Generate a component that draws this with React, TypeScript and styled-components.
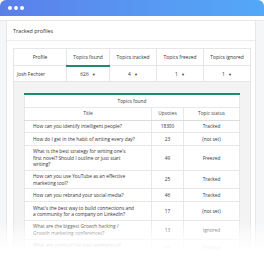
import React from "react";
import styled, { createGlobalStyle } from "styled-components";

const Global = createGlobalStyle`
  html, body { margin: 0; padding: 0; background: #ffffff; }
  body { font-family: "Open Sans", "Noto Sans", sans-serif; color: #333; }
  * { box-sizing: border-box; }
`;

const Window = styled.div`
  position: relative;
  width: 264px;
  height: 257px;
  overflow: hidden;
  display: flex;
  flex-direction: column;
  background: #fff;
`;

const TitleBar = styled.div`
  height: 16px;
  flex: none;
  border-radius: 6px 6px 0 0;
  background: linear-gradient(90deg, #5b7fe9 0%, #579af3 60%, #53a8f8 100%);
  display: flex;
  align-items: center;
  gap: 2px;
  padding-left: 8px;
`;

const Dot = styled.span`
  width: 4px;
  height: 4px;
  border-radius: 50%;
  background: #ffffff;
`;

const Page = styled.div`
  flex: 1;
  margin-top: 4px;
  border-top: 1px solid #e8e8ea;
  display: flex;
  background: #f5f6f8;
`;

const Gutter = styled.div<{ $side: "left" | "right" }>`
  flex: none;
  width: ${(p) => (p.$side === "left" ? "7px" : "9px")};
  ${(p) => (p.$side === "left" ? "border-right" : "border-left")}: 1px solid #e6e7ea;
`;

const Card = styled.div`
  flex: 1;
  background: #fff;
  display: flex;
  flex-direction: column;
`;

const CardHeading = styled.div`
  height: 20px;
  flex: none;
  display: flex;
  align-items: center;
  padding-left: 6px;
  font-size: 5.4px;
  color: #333;
  border-bottom: 1px solid #ececee;
`;

const CardBody = styled.div`
  padding: 7px 4px 0 6px;
`;

const Table = styled.table`
  width: 100%;
  border-collapse: collapse;
  table-layout: fixed;
  font-size: 4.9px;
`;

const HeadCell = styled.th<{ $active?: boolean }>`
  height: 17px;
  font-weight: 400;
  color: #333;
  text-align: center;
  border: 1px solid #e6e6e6;
  border-bottom: ${(p) => (p.$active ? "2px solid #1d8b70" : "1px solid #e6e6e6")};
  padding: 0;
`;

const DataCell = styled.td<{ $left?: boolean }>`
  height: 16px;
  color: #333;
  text-align: ${(p) => (p.$left ? "left" : "center")};
  padding: 0 ${(p) => (p.$left ? "3px" : "0")};
  border: 1px solid #e6e6e6;
`;

const Caret = styled.span`
  display: inline-block;
  margin-left: 3px;
  font-size: 4px;
  color: #444;
`;

const ExpandCell = styled.td`
  background: #f3f3f3;
  padding: 11px 10px 0 10px;
  border: 1px solid #e6e6e6;
  border-bottom: none;
`;

const Inner = styled.table`
  width: 100%;
  border-collapse: collapse;
  table-layout: fixed;
  background: #fff;
  border-top: 2px solid #1d8b70;
  font-size: 4.8px;
  line-height: 6.2px;
`;

const InnerTitle = styled.th`
  height: 13px;
  font-weight: 400;
  color: #333;
  text-align: center;
  border: 1px solid #e8e8e8;
`;

const InnerHead = styled.th`
  height: 13px;
  font-weight: 400;
  color: #444;
  text-align: center;
  border: 1px solid #e8e8e8;
  border-bottom: 1px solid #dcdcdc;
`;

const InnerCell = styled.td<{ $left?: boolean }>`
  padding: ${(p) => (p.$left ? "2.7px 6px 2.7px 8px" : "2.7px 2px")};
  text-align: ${(p) => (p.$left ? "left" : "center")};
  white-space: ${(p) => (p.$left ? "pre-line" : "normal")};
  color: #333;
  border: 1px solid #e8e8e8;
  vertical-align: middle;
`;

const Fade = styled.div`
  position: absolute;
  left: 0;
  right: 0;
  bottom: 0;
  height: 36px;
  background: linear-gradient(
    to bottom,
    rgba(255, 255, 255, 0) 0%,
    rgba(255, 255, 255, 0.65) 40%,
    #ffffff 82%
  );
  pointer-events: none;
`;

const topics: [string, string, string][] = [
  ["How can you identify intelligent people?", "18300", "Tracked"],
  ["How do I get in the habit of writing every day?", "23", "(not set)"],
  [
    "What is the best strategy for writing one's\nfirst novel? Should I outline or just start\nwriting?",
    "49",
    "Freezed",
  ],
  ["How can you use YouTube as an effective\nmarketing tool?", "25", "Tracked"],
  ["How can you rebrand your social media?", "46", "Tracked"],
  [
    "What's the best way to build connections and\na community for a company on LinkedIn?",
    "17",
    "(not set)",
  ],
  ["What are the biggest Growth hacking /\nGrowth marketing conferences?", "13", "Ignored"],
  ["What are some of the best examples of\nviral marketing campaigns?", "72", "Tracked"],
];

export default function App() {
  return (
    <>
      <Global />
      <Window>
        <TitleBar>
          <Dot />
          <Dot />
          <Dot />
        </TitleBar>
        <Page>
          <Gutter $side="left" />
          <Card>
            <CardHeading>Tracked profiles</CardHeading>
            <CardBody>
              <Table>
                <colgroup>
                  <col style={{ width: "53px" }} />
                  <col style={{ width: "43px" }} />
                  <col style={{ width: "47px" }} />
                  <col style={{ width: "47px" }} />
                  <col />
                </colgroup>
                <thead>
                  <tr>
                    <HeadCell>Profile</HeadCell>
                    <HeadCell $active>Topics found</HeadCell>
                    <HeadCell>Topics tracked</HeadCell>
                    <HeadCell>Topics freezed</HeadCell>
                    <HeadCell>Topics ignored</HeadCell>
                  </tr>
                </thead>
                <tbody>
                  <tr>
                    <DataCell $left>Josh Fechter</DataCell>
                    <DataCell>
                      626<Caret>▼</Caret>
                    </DataCell>
                    <DataCell>
                      4<Caret>▼</Caret>
                    </DataCell>
                    <DataCell>
                      1<Caret>▼</Caret>
                    </DataCell>
                    <DataCell>
                      1<Caret>▼</Caret>
                    </DataCell>
                  </tr>
                  <tr>
                    <ExpandCell colSpan={5}>
                      <Inner>
                        <colgroup>
                          <col />
                          <col style={{ width: "32px" }} />
                          <col style={{ width: "56px" }} />
                        </colgroup>
                        <thead>
                          <tr>
                            <InnerTitle colSpan={3}>Topics found</InnerTitle>
                          </tr>
                          <tr>
                            <InnerHead>Title</InnerHead>
                            <InnerHead>Upvotes</InnerHead>
                            <InnerHead>Topic status</InnerHead>
                          </tr>
                        </thead>
                        <tbody>
                          {topics.map(([t, u, s]) => (
                            <tr key={t}>
                              <InnerCell $left>{t}</InnerCell>
                              <InnerCell>{u}</InnerCell>
                              <InnerCell>{s}</InnerCell>
                            </tr>
                          ))}
                        </tbody>
                      </Inner>
                    </ExpandCell>
                  </tr>
                </tbody>
              </Table>
            </CardBody>
          </Card>
          <Gutter $side="right" />
        </Page>
        <Fade />
      </Window>
    </>
  );
}
